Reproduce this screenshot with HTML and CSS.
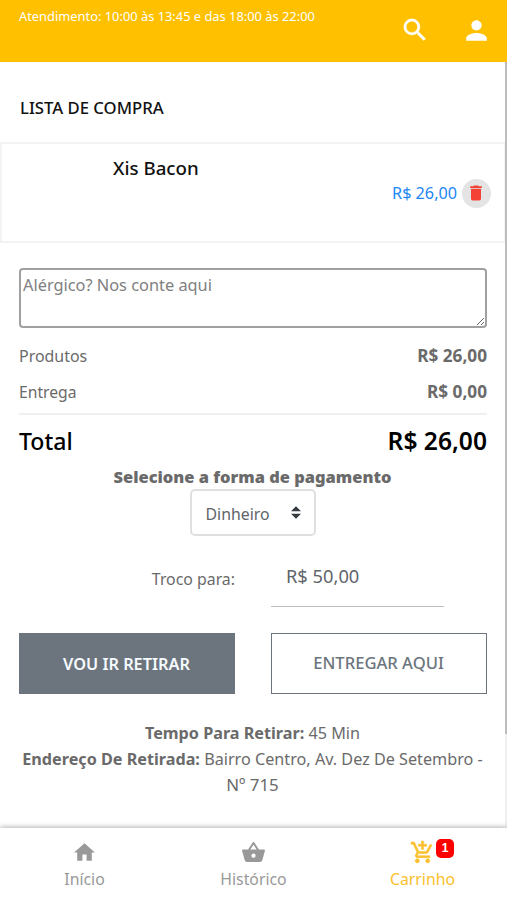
FILE: index.html
```
<!DOCTYPE html>
<html lang="pt-BR">
<head>
<meta charset="utf-8">
<title>Lista de compra</title>
<link rel="stylesheet" href="styles.css">
</head>
<body>
<header class="topbar">
  <p class="hours">Atendimento: 10:00 às 13:45 e das 18:00 às 22:00</p>
  <div class="actions">
    <svg class="icon-search" viewBox="0 0 24 24"><path d="M15.5 14h-.79l-.28-.27A6.471 6.471 0 0 0 16 9.5 6.5 6.5 0 1 0 9.5 16c1.61 0 3.09-.59 4.23-1.57l.27.28v.79l5 4.99L20.49 19l-4.99-5zm-6 0C7.01 14 5 11.99 5 9.5S7.01 5 9.5 5 14 7.01 14 9.5 11.99 14 9.5 14z"/></svg>
    <svg class="icon-user" viewBox="0 0 24 24"><path d="M12 12c2.21 0 4-1.79 4-4s-1.79-4-4-4-4 1.790-4 4 1.790 4 4 4zm0 2c-2.670 0-8 1.340-8 4v2h16v-2c0-2.660-5.330-4-8-4z"/></svg>
  </div>
</header>
<div class="viewport">
  <main class="content">
    <h1 class="title">LISTA DE COMPRA</h1>
    <section class="item">
      <h2 class="item-name">Xis Bacon</h2>
      <div class="item-side">
        <span class="item-price">R$ 26,00</span>
        <button class="remove" aria-label="Remover"><svg viewBox="0 0 24 24"><path d="M6 19c0 1.100.9 2 2 2h8c1.100 0 2-.9 2-2V7H6v12zM19 4h-3.500l-1-1h-5l-1 1H5v2h14V4z"/></svg></button>
      </div>
    </section>
    <section class="details">
      <textarea class="note" placeholder="Alérgico? Nos conte aqui"></textarea>
      <div class="line"><span>Produtos</span><b>R$ 26,00</b></div>
      <div class="line"><span class="delivery">Entrega</span><b>R$ 0,00</b></div>
      <div class="total"><span>Total</span><b>R$ 26,00</b></div>
      <p class="pay-label">Selecione a forma de pagamento</p>
      <div class="select"><span>Dinheiro</span><svg viewBox="0 0 4 5"><path d="M2 0L0 2h4zm0 5L0 3h4z"/></svg></div>
      <div class="change"><label class="change-label">Troco para:</label><div class="change-value">R$ 50,00</div></div>
      <div class="buttons">
        <button class="btn btn-fill">VOU IR RETIRAR</button>
        <button class="btn btn-line">ENTREGAR AQUI</button>
      </div>
      <div class="pickup">
        <p><b>Tempo Para Retirar:</b> 45 Min</p>
        <p><b>Endereço De Retirada:</b> Bairro Centro, Av. Dez De Setembro - <span class="number">Nº 715</span></p>
      </div>
    </section>
  </main>
  <div class="scrollbar"><div class="thumb"></div></div>
</div>
<nav class="tabs">
  <a class="tab"><svg viewBox="0 0 24 24"><path d="M10 20v-6h4v6h5v-8h3L12 3 2 12h3v8z"/></svg><span>Início</span></a>
  <a class="tab"><svg viewBox="0 0 24 24"><path d="M17.210 9l-4.380-6.560c-.19-.28-.51-.42-.83-.42-.32 0-.64.14-.83.43L6.790 9H2c-.55 0-1 .45-1 1 0 .09.010.18.040.27l2.540 9.270c.23.84 1 1.460 1.920 1.460h13c.92 0 1.690-.62 1.930-1.460l2.540-9.270L23 10c0-.55-.45-1-1-1h-4.790zM9 9l3-4.400L15 9H9zm3 8c-1.100 0-2-.9-2-2s.9-2 2-2 2 .9 2 2-.9 2-2 2z"/></svg><span>Histórico</span></a>
  <a class="tab active"><span class="cart"><svg viewBox="0 0 24 24"><path d="M11 9h2V6h3V4h-3V1h-2v3H8v2h3v3zm-4 9c-1.100 0-1.990.9-1.990 2S5.900 22 7 22s2-.9 2-2-.9-2-2-2zm10 0c-1.100 0-1.990.9-1.990 2s.89 2 1.990 2 2-.9 2-2-.9-2-2-2zm-9.830-3.250l.03-.12.9-1.630h7.450c.75 0 1.410-.41 1.750-1.030l3.860-7.010L19.420 4h-.01l-1.100 2-2.760 5H8.530l-.13-.27L6.160 6l-.95-2-.94-2H1v2h2l3.600 7.590-1.350 2.450c-.16.28-.25.61-.25.96 0 1.100.9 2 2 2h12v-2H7.420c-.13 0-.25-.11-.25-.25z"/></svg><span class="badge">1</span></span><span>Carrinho</span></a>
</nav>
</body>
</html>
```
FILE: styles.css
```
* { box-sizing: border-box; }

body {
  margin: 0;
  height: 900px;
  display: flex;
  flex-direction: column;
  overflow: hidden;
  background: #fff;
  color: #6a6a6a;
  font: 400 16.2px/26px "Noto Sans", "Open Sans", sans-serif;
}

h1, h2, p { margin: 0; }
b { font-weight: 700; }
svg { display: block; fill: currentColor; }
button { font-family: inherit; padding: 0; }

.topbar {
  height: 62px;
  flex: none;
  display: flex;
  justify-content: space-between;
  padding: 0 15px 0 19px;
  background: #ffc000;
  color: #fff;
}
.hours { padding-top: 6px; font-size: 12.86px; line-height: 20px; white-space: nowrap; }
.actions { display: flex; align-items: center; gap: 31px; margin-top: -2px; }
.icon-search { width: 30px; height: 30px; stroke: currentColor; stroke-width: .3; }
.icon-user { width: 31px; height: 31px; }

.viewport { flex: 1; min-height: 0; display: flex; }
.content { flex: 1; min-width: 0; }
.scrollbar { width: 2px; background: #f0f0f0; }
.thumb { height: 672px; background: #bdbdbd; }

.title {
  height: 80px;
  padding: 33px 19px 0 20px;
  color: #111;
  font-size: 16.7px;
  font-weight: 500;
  line-height: 26px;
}

.item {
  height: 101px;
  display: flex;
  justify-content: space-between;
  padding: 10px 13px 0 111px;
  border: 2px solid #f3f3f3;
  border-right-width: 1px;
}
.item-name { color: #111; font-size: 18.7px; font-weight: 500; line-height: 28px; }
.item-side { display: flex; align-items: center; gap: 5px; height: 28px; margin-top: 25px; }
.item-price { color: #1c86f5; }
.remove {
  width: 29px;
  height: 29px;
  display: grid;
  place-items: center;
  border: 0;
  border-radius: 50%;
  background: #e4e4e4;
  color: #f44336;
}
.remove svg { width: 20px; height: 20px; margin-right: 1px; }

.details { padding: 25px 19px 0 19px; }
.note {
  display: block;
  width: 468px;
  height: 60px;
  padding: 2px;
  border: 2px solid #a0a0a0;
  border-radius: 4px;
  font: 400 16.35px/26px "Noto Sans", sans-serif;
  color: #666;
}
.note::placeholder { color: #808080; }
.line { display: flex; justify-content: space-between; width: 468px; height: 36px; font-size: 15.95px; }
.note + .line { margin-top: 15px; }
.note + .line + .line { height: 34px; }
.line b { font-size: 17.2px; font-weight: 700; }
.delivery { font-size: 15.7px; }

.total {
  display: flex;
  justify-content: space-between;
  width: 468px;
  padding-top: 9px;
  border-top: 2px solid #f0f0f0;
  color: #000;
  font-size: 23.1px;
  font-weight: 500;
  line-height: 34px;
}
.total b { font-size: 24.6px; font-weight: 600; }
.pay-label { margin-top: 6px; text-align: center; font-size: 16.45px; font-weight: 900; line-height: 26px; }
.select {
  display: flex;
  align-items: center;
  justify-content: space-between;
  width: 126px;
  height: 47px;
  margin: -1px auto 0;
  padding: 2px 13px 0 14px;
  border: 2px solid #dedfe1;
  border-radius: 5px;
  color: #5f656b;
  font-size: 15.85px;
}
.select svg { width: 10px; height: 13px; color: #343a40; margin-top: -3px; }
.change { display: flex; justify-content: flex-end; margin: 26px 42px 0 0; }
.change-label { padding-top: 4px; margin-right: 36px; font-size: 15.85px; }
.change-value {
  width: 173px;
  height: 45px;
  padding: 1px 15px 0;
  border-bottom: 1px solid #bfbfbf;
  color: #5f656b;
  font-size: 18.3px;
}
.buttons { display: flex; justify-content: space-between; width: 468px; margin-top: 26px; }
.btn {
  width: 216px;
  height: 61px;
  padding-right: 1px;
  border: 1px solid #6c757d;
  font-size: 16.3px;
}
.btn-fill { background: #6c757d; color: #f6fbff; font-weight: 600; }
.btn-line { background: #fff; color: #6c757d; font-size: 16.6px; font-weight: 500; padding-bottom: 2px; }
.pickup { margin: 26px -10px 0; text-align: center; }
.number { display: block; font-size: 16.9px; }

.tabs {
  position: relative;
  height: 72px;
  flex: none;
  display: grid;
  grid-template-columns: repeat(3, 1fr);
  padding-top: 12px;
  background: #fff;
  box-shadow: 0 -1px 5px rgba(0, 0, 0, .3);
  color: #999;
}
.tab { display: flex; flex-direction: column; align-items: center; font-size: 15.8px; line-height: 24px; }
.tab svg { width: 25px; height: 25px; }
.tab > span:last-child { margin-top: 2px; }
.tab.active { color: #fbc02d; }
.cart { position: relative; display: block; }
.tab .cart svg { stroke: currentColor; stroke-width: .5; }
.badge {
  position: absolute;
  left: 26px;
  top: -1px;
  width: 18px;
  height: 19px;
  border-radius: 5px;
  background: #f00;
  color: #fff;
  font: 700 12px/19px "Liberation Sans", sans-serif;
  text-align: center;
}
```
